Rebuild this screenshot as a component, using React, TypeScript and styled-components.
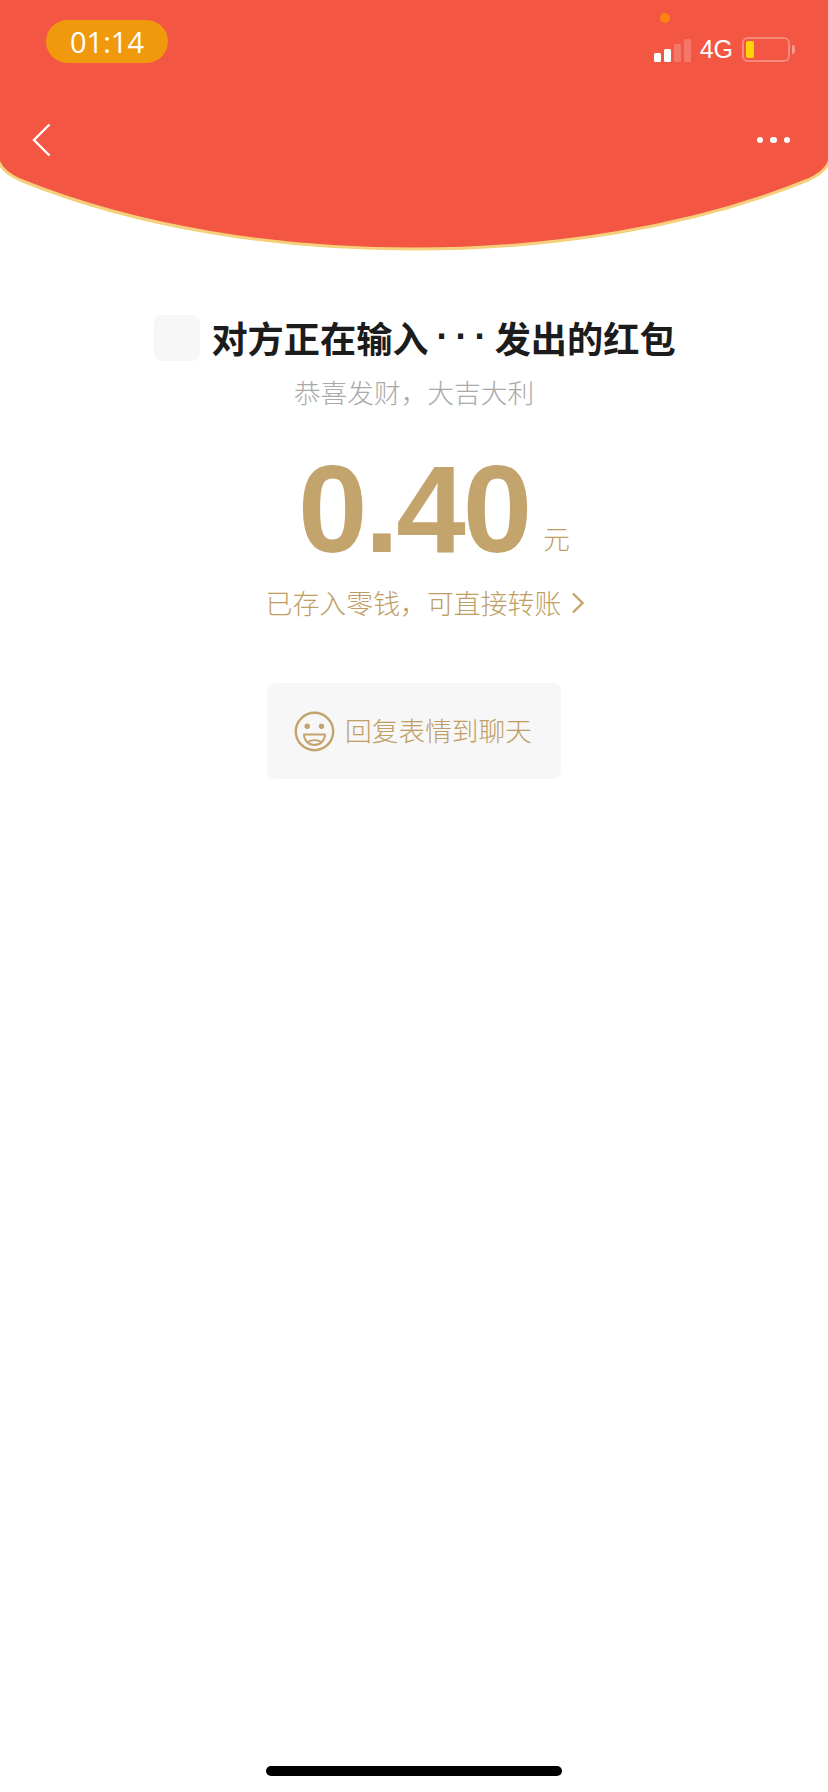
import React from 'react';
import styled, { createGlobalStyle } from 'styled-components';

const GlobalStyle = createGlobalStyle`
  html, body {
    margin: 0;
    padding: 0;
    background: #ffffff;
  }
`;

const cjk = `"Noto Sans CJK SC", "Noto Sans", sans-serif`;
const gold = '#c4a46d';
const goldText = '#bf9e64';

const Page = styled.div`
  width: 828px;
  height: 1792px;
  display: flex;
  flex-direction: column;
  align-items: center;
  background: #ffffff;
  font-family: ${cjk};
  overflow: hidden;
`;

const Header = styled.header`
  position: relative;
  width: 100%;
  height: 251px;
  flex-shrink: 0;
`;

const HeaderShape = styled.svg`
  position: absolute;
  inset: 0;
`;

const HeaderContent = styled.div`
  position: relative;
  display: flex;
  flex-direction: column;
`;

const StatusBar = styled.div`
  display: flex;
  justify-content: space-between;
  align-items: flex-start;
  height: 124px;
  padding: 20px 38px 0 46px;
  box-sizing: border-box;
`;

const TimePill = styled.div`
  width: 122px;
  height: 43px;
  border-radius: 22px;
  background: #f1990d;
  color: #ffffff;
  font-family: "Open Sans", sans-serif;
  font-size: 29px;
  font-weight: 500;
  line-height: 43px;
  text-align: center;
`;

const StatusRight = styled.div`
  display: flex;
  align-items: center;
  margin-top: 17px;
`;

const RecordingDot = styled.span`
  position: absolute;
  left: 660px;
  top: 13px;
  width: 10px;
  height: 10px;
  border-radius: 50%;
  background: #fb8412;
`;

const SignalBars = styled.div`
  display: flex;
  align-items: flex-end;
  gap: 3px;
  height: 24px;
`;

const Bar = styled.span<{ $h: number; $on?: boolean }>`
  width: 7px;
  height: ${p => p.$h}px;
  border-radius: 1.5px;
  background: ${p => (p.$on ? '#ffffff' : 'rgba(255, 255, 255, 0.2)')};
`;

const NetworkLabel = styled.span`
  margin-left: 9px;
  font-family: "Liberation Sans", sans-serif;
  font-size: 25px;
  line-height: 25px;
  color: #ffffff;
`;

const Battery = styled.div`
  margin-left: 9px;
  width: 48px;
  height: 25px;
  box-sizing: border-box;
  padding: 2px;
  border: 2px solid rgba(255, 255, 255, 0.3);
  border-radius: 6px;
  display: flex;
  position: relative;
`;

const BatteryFill = styled.span`
  width: 8px;
  height: 100%;
  border-radius: 2px;
  background: #ffd50a;
`;

const BatteryNub = styled.span`
  position: absolute;
  right: -7px;
  top: 6px;
  width: 3px;
  height: 9px;
  border-radius: 0 4px 4px 0;
  background: rgba(255, 255, 255, 0.4);
`;

const NavBar = styled.nav`
  display: flex;
  justify-content: space-between;
  align-items: center;
  height: 32px;
  padding: 0 38px 0 32px;
`;

const MoreDots = styled.div`
  display: flex;
  gap: 7px;
`;

const Dot = styled.span`
  width: 6.5px;
  height: 6.5px;
  border-radius: 50%;
  background: #ffffff;
`;

const Sender = styled.div`
  display: flex;
  align-items: center;
  margin-top: 64px;
  padding-left: 2px;
  height: 46px;
`;

const Avatar = styled.div`
  width: 46px;
  height: 46px;
  border-radius: 8px;
  background: #f7f7f7;
  margin-right: 11px;
`;

const SenderName = styled.div`
  display: flex;
  padding-bottom: 3px;
  font-size: 36.2px;
  line-height: 46px;
  font-weight: 600;
  color: #1c1c1c;
  white-space: nowrap;
`;

const TypingDots = styled.span`
  font-family: "Liberation Sans", sans-serif;
  font-weight: 700;
  letter-spacing: 7px;
  margin: 0 1px 0 8px;
`;

const Blessing = styled.div`
  margin-top: 11px;
  font-size: 26.7px;
  line-height: 40px;
  font-weight: 300;
  color: #a9a9a9;
`;

const AmountRow = styled.div`
  display: flex;
  align-items: baseline;
  margin-top: 47px;
  padding-left: 40px;
  color: ${gold};
`;

const Amount = styled.span`
  font-family: "Liberation Sans", sans-serif;
  font-size: 125px;
  line-height: 100px;
  font-weight: 700;
  letter-spacing: -3px;
`;

const Unit = styled.span`
  margin-left: 14px;
  font-size: 26.7px;
  font-weight: 300;
  color: ${goldText};
  position: relative;
  top: -3px;
`;

const BalanceLink = styled.div`
  display: flex;
  align-items: center;
  margin-top: 23px;
  padding-left: 24px;
  font-size: 26.9px;
  line-height: 40px;
  font-weight: 300;
  color: ${goldText};
`;

const ReplyButton = styled.div`
  display: flex;
  align-items: center;
  justify-content: center;
  gap: 10px;
  margin-top: 60px;
  padding-right: 2px;
  box-sizing: border-box;
  width: 294px;
  height: 96px;
  border-radius: 8px;
  background: #f7f7f7;
  font-size: 26.7px;
  font-weight: 300;
  color: ${goldText};
`;

const ReplyLabel = styled.span`
  padding-bottom: 3px;
`;

const HomeIndicator = styled.div`
  margin-top: auto;
  margin-bottom: 16px;
  width: 296px;
  height: 10px;
  border-radius: 5px;
  background: #000000;
`;

const BLESSING = '恭喜发财\uFF0C大吉大利';
const BALANCE_NOTE = '已存入零钱\uFF0C可直接转账';

const App: React.FC = () => {
  return (
    <Page>
      <GlobalStyle />
      <Header>
        <HeaderShape width="828" height="251" viewBox="0 0 828 251">
          <path
            d="M-2 -2 H830 V160 Q826 172 808 180 C690 228 550 249 414 249 C278 249 138 228 20 180 Q2 172 -2 160 Z"
            fill="#f35642"
            stroke="#f6cf7b"
            strokeWidth="3"
          />
        </HeaderShape>
        <RecordingDot />
        <HeaderContent>
          <StatusBar>
            <TimePill>01:14</TimePill>
            <StatusRight>
              <SignalBars>
                <Bar $h={9} $on />
                <Bar $h={13} $on />
                <Bar $h={18} />
                <Bar $h={23} />
              </SignalBars>
              <NetworkLabel>4G</NetworkLabel>
              <Battery>
                <BatteryFill />
                <BatteryNub />
              </Battery>
            </StatusRight>
          </StatusBar>
          <NavBar>
            <svg width="20" height="34" viewBox="0 0 20 34" fill="none">
              <path d="M17.5 1.5 2 17l15.5 15.5" stroke="#ffffff" strokeWidth="2.4" />
            </svg>
            <MoreDots>
              <Dot />
              <Dot />
              <Dot />
            </MoreDots>
          </NavBar>
        </HeaderContent>
      </Header>

      <Sender>
        <Avatar />
        <SenderName>
          对方正在输入<TypingDots>···</TypingDots>发出的红包
        </SenderName>
      </Sender>
      <Blessing>{BLESSING}</Blessing>

      <AmountRow>
        <Amount>0.40</Amount>
        <Unit>元</Unit>
      </AmountRow>

      <BalanceLink>
        {BALANCE_NOTE}
        <svg width="16" height="24" viewBox="0 0 16 24" fill="none" style={{ marginLeft: 9 }}>
          <path d="M3 2.5 12.5 12 3 21.5" stroke={gold} strokeWidth="2.4" />
        </svg>
      </BalanceLink>

      <ReplyButton>
        <svg width="41" height="41" viewBox="0 0 41 41" fill="none">
          <circle cx="20.5" cy="20.5" r="18.7" stroke={gold} strokeWidth="2.4" />
          <circle cx="13.2" cy="15.2" r="2.7" fill={gold} />
          <circle cx="27.5" cy="15.2" r="2.7" fill={gold} />
          <path d="M10 23.5h21c0 6-4.6 10.5-10.5 10.5S10 29.5 10 23.5Z" stroke={gold} strokeWidth="1.9" />
          <path d="M13.5 31c4-2.5 10-2.5 14 0" stroke={gold} strokeWidth="1.7" />
        </svg>
        <ReplyLabel>回复表情到聊天</ReplyLabel>
      </ReplyButton>

      <HomeIndicator />
    </Page>
  );
};

export default App;
